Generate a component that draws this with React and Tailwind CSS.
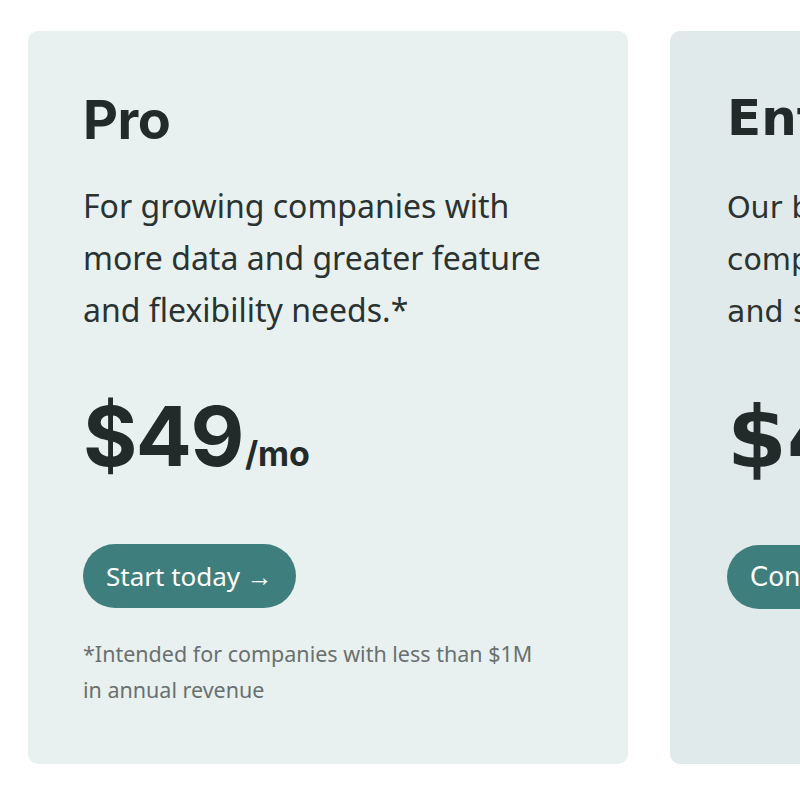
export default function App() {
  return (
    <div className="w-[800px] h-[800px] overflow-hidden bg-white">
      <div className="flex gap-[42px] pl-[28px] pt-[31px]">
        <div className="shrink-0 w-[600px] h-[733px] rounded-[10px] bg-[#e8f1f0] pl-[55px] pt-[62px] text-[#222b29]">
          <h2 className="font-['Inter','Liberation_Sans',sans-serif] text-[54px] leading-none font-bold tracking-[-0.5px]">Pro</h2>
          <p className="font-['Noto_Sans','Liberation_Sans',sans-serif] mt-[33px] text-[32px] leading-[52px] text-[#2a3331] w-[500px]">
            For growing companies with more data and greater feature and flexibility needs.*
          </p>
          <div className="font-['Inter','Liberation_Sans',sans-serif] mt-[59px] flex items-baseline font-bold">
            <span className="text-[83px] leading-none tracking-[-1.5px]">$49</span>
            <span className="ml-[2px] text-[34px] leading-none">/mo</span>
          </div>
          <button className="font-['Noto_Sans','Liberation_Sans',sans-serif] mt-[66px] h-[64px] px-[23px] rounded-full bg-[#3e7f7e] text-white text-[26px] flex items-center">
            Start today →
          </button>
          <p className="font-['Noto_Sans','Liberation_Sans',sans-serif] mt-[28px] text-[21.5px] leading-[36px] text-[#69706f] w-[470px]">
            *Intended for companies with less than $1M in annual revenue
          </p>
        </div>
        <div className="shrink-0 w-[600px] h-[733px] rounded-[10px] bg-[#e1eaeb] pl-[57px] pt-[62px] text-[#222b29] font-['DejaVu_Sans',sans-serif]">
          <h2 className="text-[50px] leading-none font-bold">Enterprise</h2>
          <p className="mt-[39px] text-[30px] leading-[52px] text-[#2a3331] w-[500px]">
            Our best plan for large companies with advanced needs and support.
          </p>
          <div className="mt-[56px] flex items-baseline font-bold">
            <span className="text-[86px] leading-none">$499</span>
            <span className="text-[32px] leading-none">/mo</span>
          </div>
          <button className="mt-[65px] h-[64px] px-[23px] rounded-full bg-[#3e7f7e] text-white text-[26px] flex items-center">
            Contact sales →
          </button>
        </div>
      </div>
    </div>
  );
}
